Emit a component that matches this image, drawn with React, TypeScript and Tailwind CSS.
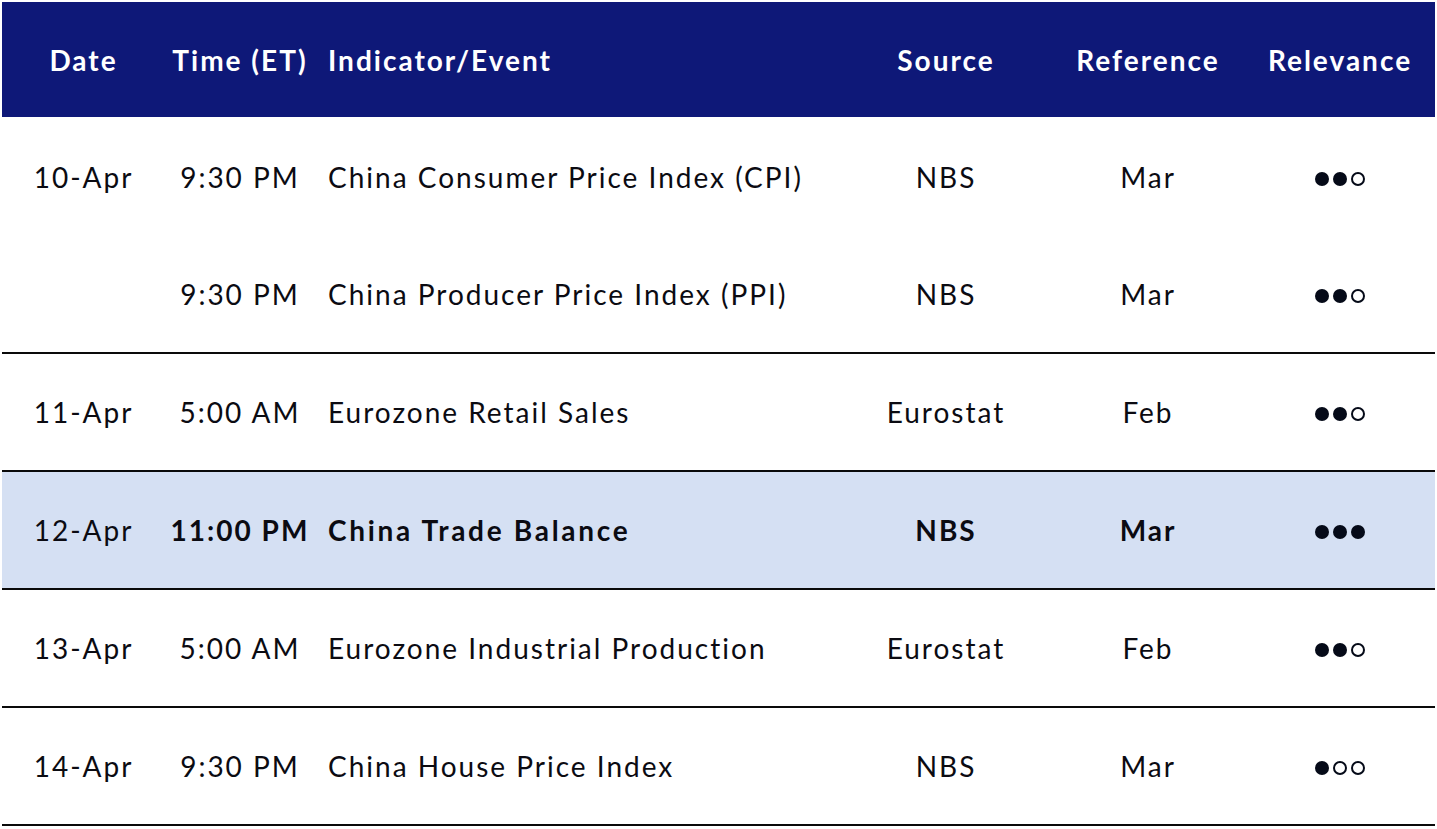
const rows = [
  { date: "10-Apr", time: "9:30 PM", event: "China Consumer Price Index (CPI)", source: "NBS", ref: "Mar", rel: 2, border: false },
  { date: "", time: "9:30 PM", event: "China Producer Price Index (PPI)", source: "NBS", ref: "Mar", rel: 2, border: true },
  { date: "11-Apr", time: "5:00 AM", event: "Eurozone Retail Sales", source: "Eurostat", ref: "Feb", rel: 2, border: true },
  { date: "12-Apr", time: "11:00 PM", event: "China Trade Balance", source: "NBS", ref: "Mar", rel: 3, border: true, hot: true },
  { date: "13-Apr", time: "5:00 AM", event: "Eurozone Industrial Production", source: "Eurostat", ref: "Feb", rel: 2, border: true },
  { date: "14-Apr", time: "9:30 PM", event: "China House Price Index", source: "NBS", ref: "Mar", rel: 1, border: true },
];

function Dots({ n }: { n: number }) {
  return (
    <div className="mt-[3px] flex items-center gap-[4px]">
      {[0, 1, 2].map((i) =>
        i < n ? (
          <span key={i} className="h-[14px] w-[14px] rounded-full bg-[#050a18]" />
        ) : (
          <span key={i} className="h-[14px] w-[14px] rounded-full border-2 border-[#050a18]" />
        )
      )}
    </div>
  );
}

const cols = "grid grid-cols-[163px_150px_526px_210px_194px_190px]";

export default function App() {
  return (
    <div
      className="min-h-screen w-[1437px] bg-white p-[2px] text-[#0b0b12]"
      style={{ fontFamily: "Lato, 'Noto Sans', sans-serif" }}
    >
      <div className={`${cols} h-[115px] items-center bg-[#0e1878] text-[28px] font-bold tracking-[2px] text-white`}>
        <div className="text-center">Date</div>
        <div className="text-center">Time (ET)</div>
        <div className="pl-[13px]">Indicator/Event</div>
        <div className="text-center">Source</div>
        <div className="text-center">Reference</div>
        <div className="text-center">Relevance</div>
      </div>
      {rows.map((r, i) => (
        <div
          key={i}
          className={`${cols} h-[118px] items-center text-[28px] tracking-[2px] ${r.border ? "border-b-2 border-[#0a0a0a]" : ""} ${r.hot ? "bg-[#d5e0f3]" : ""} ${i === 0 ? "mt-[1px]" : ""}`}
        >
          <div className="text-center">{r.date}</div>
          <div className={`text-center ${r.hot ? "font-bold" : ""}`}>{r.time}</div>
          <div className={`pl-[13px] ${r.hot ? "font-bold tracking-[2.7px]" : ""}`}>{r.event}</div>
          <div className={`text-center ${r.hot ? "font-bold" : ""}`}>{r.source}</div>
          <div className={`text-center ${r.hot ? "font-bold" : ""}`}>{r.ref}</div>
          <div className="flex justify-center">
            <Dots n={r.rel} />
          </div>
        </div>
      ))}
    </div>
  );
}
